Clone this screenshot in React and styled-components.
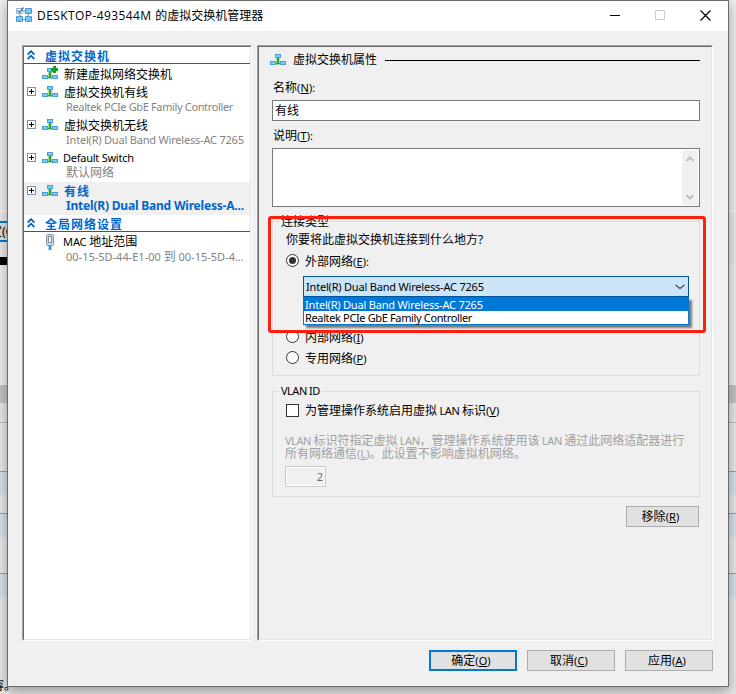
import React from "react";
import styled, { createGlobalStyle, css } from "styled-components";

const Global = createGlobalStyle`
  * { box-sizing: border-box; }
  html, body { margin: 0; padding: 0; overflow: hidden; }
  body { font: 12px/14px "Noto Sans", "Noto Sans CJK SC", sans-serif; color: #000; }
`;

const Desktop = styled.div`
  display: grid;
  width: 736px;
  height: 694px;
  overflow: hidden;
  background: #e9e9e9;
  & > * { grid-area: 1 / 1; }
`;

const Backdrop = styled.div`
  display: flex;
  flex-direction: column;
`;

const Band = styled.div`
  flex: none;
  display: flex;
  height: ${(p) => p.$h}px;
  background: ${(p) => p.$bg};
  border-top: ${(p) => (p.$line ? `1px solid ${p.$line}` : "none")};
  overflow: hidden;
`;

const BehindButton = styled.div`
  width: 60px;
  height: 21px;
  border: 2px solid #0078d7;
  border-left: 0;
  background: #e1e1e1;
  line-height: 17px;
  text-indent: -10px;
`;

const BlackBar = styled.div`
  width: 20px;
  background: #000;
`;

const BehindText = styled.div`
  text-indent: -8px;
  line-height: 13px;
`;

const Window = styled.section`
  display: flex;
  flex-direction: column;
  width: 722px;
  height: 687px;
  margin-left: 7px;
  border: 1px solid #6b6b6b;
  background: #f0f0f0;
  box-shadow: 0 4px 12px rgba(0, 0, 0, 0.35);
  z-index: 1;
`;

const TitleBar = styled.header`
  display: flex;
  align-items: center;
  height: 30px;
  padding: 0 17px 2px 8px;
  background: #fff;
`;

const Title = styled.h1`
  flex: 1;
  margin: 2px 0 0 5px;
  font: 12px/16px "Open Sans", "Noto Sans CJK SC", sans-serif;
  white-space: nowrap;
`;

const TitleLatin = styled.span`
  letter-spacing: 0.42px;
`;

const WindowControls = styled.div`
  display: flex;
  align-items: center;
  gap: 35px;
  svg { display: block; }
`;

const Latin = styled.span`
  font-size: 11px;
  letter-spacing: ${(p) => p.$ls ?? -0.2}px;
`;

const Content = styled.main`
  display: flex;
  gap: 5px;
  padding: 14px 15px 0 14px;
`;

const Panel = styled.div`
  width: ${(p) => p.$w}px;
  height: 596px;
  border: 1px solid;
  border-color: #a0a0a0 #fff #fff #a0a0a0;
  background: ${(p) => p.$bg};
`;

const PanelInner = styled.div`
  height: 100%;
  border: 1px solid;
  border-color: #696969 #e3e3e3 #e3e3e3 #696969;
  padding: ${(p) => p.$pad || 0};
`;

const SectionHeader = styled.div`
  display: flex;
  align-items: center;
  height: 17px;
  padding: 4px 0 0 3px;
  border-bottom: 1px solid #0066cc;
  color: #0066cc;
  font-weight: bold;
  letter-spacing: 1px;
  svg { margin: -4px 10px 0 0; }
`;

const TreeRow = styled.div`
  display: grid;
  grid-template-columns: 18px 21px 1fr;
  grid-template-rows: 18px 12px;
  align-items: center;
  height: ${(p) => p.$h || 33}px;
  margin-top: ${(p) => p.$mt || 0}px;
  white-space: nowrap;
  ${(p) =>
    p.$selected &&
    css`
      background: #f0f0f0;
      color: #0066cc;
      font-weight: bold;
    `}
`;

const RowName = styled.div`
  padding: ${(p) => (p.$latin ? "0" : "2px 0 0 1px")};
  letter-spacing: ${(p) => p.$ls || 0}px;
`;

const RowDetail = styled.div`
  grid-column: 3;
  grid-row: 2;
  padding-left: 3px;
  color: ${(p) => (p.$selected ? "#0066cc" : "#838383")};
  font-size: ${(p) => p.$size || 12}px;
  letter-spacing: ${(p) => p.$ls || 0}px;
  line-height: 12px;
`;

const PanelHeading = styled.div`
  display: flex;
  align-items: center;
  height: 16px;
  svg { margin: 0 7px 0 -2px; }
  &::after {
    content: "";
    flex: 1;
    height: 1px;
    margin-left: 8px;
    background: #000;
  }
`;

const FieldLabel = styled.label`
  display: block;
  height: 14px;
  margin-top: ${(p) => p.$mt}px;
  padding-left: 1px;
`;

const TextField = styled.div`
  height: 21px;
  margin-top: 5px;
  padding: 0 2px;
  border: 1px solid #7a7a7a;
  background: #fff;
  line-height: 19px;
`;

const TextArea = styled.div`
  display: flex;
  justify-content: flex-end;
  height: 59px;
  margin-top: 5px;
  padding: 1px;
  border: 1px solid #7a7a7a;
  background: #fff;
`;

const Scrollbar = styled.div`
  display: flex;
  flex-direction: column;
  justify-content: space-between;
  align-items: center;
  width: 16px;
  padding: 6px 0 5px;
  background: #f0f0f0;
`;

const Group = styled.fieldset`
  position: relative;
  height: ${(p) => p.$h}px;
  min-width: 0;
  margin: ${(p) => p.$mt}px 0 0;
  padding: 11px 10px 0 12px;
  border: 1px solid #dcdcdc;
`;

const GroupTitle = styled.div`
  position: absolute;
  top: ${(p) => p.$top}px;
  left: 6px;
  padding: 0 2px;
  background: #f0f0f0;
  line-height: 14px;
`;

const Choice = styled.div`
  display: flex;
  align-items: flex-start;
  gap: 6px;
  height: 14px;
  margin-top: ${(p) => p.$mt || 0}px;
  padding-left: 1px;
  white-space: nowrap;
`;

const ChoiceLabel = styled.span`
  padding-top: 1px;
`;

const Radio = styled.span`
  display: grid;
  place-items: center;
  width: 13px;
  height: 13px;
  border: 1px solid #333;
  border-radius: 50%;
  background: #fff;
  &::after {
    content: "";
    width: 7px;
    height: 7px;
    border-radius: 50%;
    background: ${(p) => (p.$on ? "#333" : "transparent")};
  }
`;

const Checkbox = styled.span`
  width: 13px;
  height: 13px;
  border: 1px solid #333;
  background: #fff;
`;

const Combo = styled.div`
  position: relative;
  display: flex;
  align-items: center;
  justify-content: space-between;
  width: 386px;
  height: 21px;
  margin: 8px 0 0 18px;
  padding: 0 3px 0 2px;
  border: 1px solid #00569d;
  background: #cce4f7;
  white-space: nowrap;
`;

const DropList = styled.div`
  position: absolute;
  z-index: 2;
  top: 20px;
  left: -1px;
  width: 386px;
  border: 1px solid #0078d7;
  background: #fff;
  box-shadow: 3px 3px 2px rgba(0, 0, 0, 0.5);
`;

const DropItem = styled.div`
  height: 13px;
  padding-left: 1px;
  line-height: 13px;
  ${(p) => p.$active && "background: #0078d7; color: #fff;"}
`;

const HighlightFrame = styled.div`
  position: absolute;
  z-index: 3;
  top: -6px;
  left: -5px;
  width: 438px;
  height: 117px;
  border: 3px solid #ff1f10;
  border-radius: 3px;
`;

const Note = styled.p`
  margin: 16px 0 0;
  color: #a0a0a0;
  line-height: 13px;
  white-space: nowrap;
`;

const NumberField = styled.div`
  width: 41px;
  height: 21px;
  margin-top: 6px;
  padding-right: 2px;
  border: 1px solid #ccc;
  box-shadow: inset 0 0 0 1px #fff;
  color: #6d6d6d;
  font-size: 11px;
  line-height: 19px;
  text-align: right;
`;

const Button = styled.button`
  display: flex;
  align-items: center;
  justify-content: center;
  width: ${(p) => p.$w || 88}px;
  height: 21px;
  padding: 0 4px 0 0;
  border: ${(p) => (p.$primary ? "2px solid #0078d7" : "1px solid #adadad")};
  background: #e1e1e1;
  color: #000;
  font: inherit;
`;

const Actions = styled.div`
  display: flex;
  justify-content: flex-end;
  gap: 10px;
  margin-top: ${(p) => p.$mt}px;
  padding-right: ${(p) => p.$pr}px;
`;

const Key = ({ k, colon }) => (
  <Latin $ls={0.1}>
    (<u>{k}</u>){colon && ":"}
  </Latin>
);

const SwitchIcon = ({ add }) => (
  <svg width="16" height="16" viewBox="0 0 16 16" shapeRendering="crispEdges">
    <path d="M6 6h4v4h2v3H4v-3h2z" fill="#a6dfa0" />
    <path d="M7 6h2v5h2v1H5v-1h2z" fill="#2fa52f" />
    <path d="M5 2h6v4H5zM0 9h6v4H0zM10 9h6v4h-6z" fill="#4a9fdb" />
    <path d="M6 3h4v2H6zM1 10h4v2H1zM11 10h4v2h-4z" fill="#7accf8" />
    {add && <path d="M11 0h3v2h2v3h-2v2h-3V5H9V2h2z" fill="#0aa51a" />}
  </svg>
);

const ExpandIcon = () => (
  <svg width="9" height="10" viewBox="0 0 9 10" shapeRendering="crispEdges">
    <path d="M.5.5h8v8h-8z" fill="#fff" stroke="#7b93b3" />
    <path d="M2 4h5v1H2zM4 2h1v5H4z" fill="#000" />
  </svg>
);

const CollapseIcon = () => (
  <svg width="8" height="10" viewBox="0 0 8 10" fill="none" stroke="#0066cc" strokeWidth="1.8">
    <path d="M.7 4.500 4 1.200l3.300 3.300M.7 9 4 5.700l3.300 3.300" />
  </svg>
);

const NicIcon = () => (
  <svg width="10" height="16" viewBox="0 0 10 16">
    <path d="M3.500 11h3v5h-3z" fill="#3a9bd0" />
    <rect x="1.500" y=".5" width="7" height="11" rx="1" fill="#ccd6e0" stroke="#8495a8" />
    <rect x="3.500" y="2.500" width="3" height="6" fill="#f5f8fb" stroke="#7f90a3" />
  </svg>
);

const AppIcon = () => (
  <svg width="16" height="16" viewBox="0 0 16 16">
    <path d="M4 7v3M12 6v4M7 4h3M7 12.500h3" stroke="#7c8a96" fill="none" />
    <path d="M.5 1.500h6v5h-6z" fill="#fff" stroke="#9db2c3" />
    <path d="m1.500 3.500 2 2L7.500 .5" stroke="#1d7fd0" strokeWidth="1.300" fill="none" />
    <g fill="#74c4f4" stroke="#4b9bd3">
      <path d="M9.500 1.500h6v5h-6zM.5 9.500h6v5h-6zM9.500 9.500h6v5h-6z" />
    </g>
  </svg>
);

const Chevron = ({ down, color = "#bfbfbf", w = 8, sw = 2 }) => (
  <svg width={w} height="6" viewBox={`0 0 ${w} 6`} fill="none" stroke={color} strokeWidth={sw}>
    <path d={down ? `M.5 1 ${w / 2} 4.500 ${w - 0.5} 1` : `M.5 5 ${w / 2} 1.500 ${w - 0.5} 5`} />
  </svg>
);

const IconCell = styled.span`
  display: flex;
  align-items: center;
  padding-left: ${(p) => p.$pl || 0}px;
  height: 18px;
`;

const switches = [
  { name: "虚拟交换机有线", detail: "Realtek PCIe GbE Family Controller", ls: -0.36, size: 11 },
  { name: "虚拟交换机无线", detail: "Intel(R) Dual Band Wireless-AC 7265", ls: -0.2, size: 11 },
  { name: "Default Switch", latin: true, detail: "默认网络" },
  { name: "有线", nls: 1, detail: "Intel(R) Dual Band Wireless-A...", ls: -0.2, selected: true },
];

const bands = [
  { h: 211, bg: "#eeeeee" },
  { h: 10, bg: "#e9e9e9", line: "#fafafa" },
  { h: 36, bg: "#e9e9e9", item: "button" },
  { h: 8, bg: "#e9e9e9", item: "bar" },
  { h: 120, bg: "#efefef" },
  { h: 18, bg: "#c4c4c4" },
  { h: 19, bg: "#e6e6e4" },
  { h: 49, bg: "#e9e9e9", line: "#bcbcbc" },
  { h: 24, bg: "#d8e2ec", line: "#9c9c9c" },
  { h: 18, bg: "#e9e9e9" },
  { h: 24, bg: "#d8e2ec", line: "#9c9c9c" },
  { h: 36, bg: "#e9e9e9" },
  { h: 24, bg: "#d8e2ec", line: "#9c9c9c" },
  { h: 82, bg: "#e9e9e9" },
  { h: 15, bg: "#e6e6e6", item: "text" },
];

export default function App() {
  return (
    <>
      <Global />
      <Desktop>
        <Backdrop>
          {bands.map((b, i) => (
            <Band key={i} $h={b.h} $bg={b.bg} $line={b.line}>
              {b.item === "button" && <BehindButton>定(C)</BehindButton>}
              {b.item === "bar" && <BlackBar />}
              {b.item === "text" && <BehindText>容。</BehindText>}
            </Band>
          ))}
        </Backdrop>
        <Window>
          <TitleBar>
            <AppIcon />
            <Title>
              <TitleLatin>DESKTOP-493544M </TitleLatin>的虚拟交换机管理器
            </Title>
            <WindowControls>
              <svg width="10" height="10"><path d="M0 5.500h10" stroke="#000" /></svg>
              <svg width="10" height="10"><path d="M.5.5h9v9h-9z" fill="none" stroke="#ccc" /></svg>
              <svg width="11" height="11"><path d="m.5.5 10 10M10.500.5l-10 10" stroke="#000" strokeWidth="1.2" /></svg>
            </WindowControls>
          </TitleBar>

          <Content>
            <Panel $w={230} $bg="#fff">
              <PanelInner>
                <SectionHeader><CollapseIcon />虚拟交换机</SectionHeader>
                <TreeRow $h={18} $mt={1}>
                  <span />
                  <IconCell><SwitchIcon add /></IconCell>
                  <RowName>新建虚拟网络交换机</RowName>
                </TreeRow>
                {switches.map((s) => (
                  <TreeRow key={s.name} $selected={s.selected}>
                    <IconCell $pl={3}><ExpandIcon /></IconCell>
                    <IconCell><SwitchIcon /></IconCell>
                    <RowName $ls={s.nls} $latin={s.latin}>
                      {s.latin ? <Latin $ls={-0.25}>{s.name}</Latin> : s.name}
                    </RowName>
                    <RowDetail $ls={s.ls} $size={s.size} $selected={s.selected}>{s.detail}</RowDetail>
                  </TreeRow>
                ))}
                <SectionHeader><CollapseIcon />全局网络设置</SectionHeader>
                <TreeRow $mt={1}>
                  <span />
                  <IconCell $pl={3}><NicIcon /></IconCell>
                  <RowName $latin><Latin $ls={-0.1}>MAC </Latin>地址范围</RowName>
                  <RowDetail><Latin $ls={0}>00-15-5D-44-E1-00 </Latin>到<Latin $ls={0}> 00-15-5D-4...</Latin></RowDetail>
                </TreeRow>
              </PanelInner>
            </Panel>

            <Panel $w={456} $bg="#f0f0f0">
              <PanelInner $pad="5px 11px 0 13px">
                <PanelHeading><SwitchIcon />虚拟交换机属性</PanelHeading>
                <FieldLabel $mt={13}>名称<Key k="N" colon /></FieldLabel>
                <TextField>有线</TextField>
                <FieldLabel $mt={8}>说明<Key k="T" colon /></FieldLabel>
                <TextArea>
                  <Scrollbar><Chevron /><Chevron down /></Scrollbar>
                </TextArea>

                <Group $h={155} $mt={14}>
                  <GroupTitle $top={-7}>连接类型</GroupTitle>
                  <Choice>你要将此虚拟交换机连接到什么地方?</Choice>
                  <Choice $mt={7}><Radio $on /><ChoiceLabel>外部网络<Key k="E" colon /></ChoiceLabel></Choice>
                  <Combo>
                    <Latin>Intel(R) Dual Band Wireless-AC 7265</Latin>
                    <Chevron down color="#444" w={10} sw={1.1} />
                    <DropList>
                      <DropItem $active><Latin>Intel(R) Dual Band Wireless-AC 7265</Latin></DropItem>
                      <DropItem><Latin $ls={-0.36}>Realtek PCIe GbE Family Controller</Latin></DropItem>
                    </DropList>
                  </Combo>
                  <Choice $mt={33}><Radio /><ChoiceLabel>内部网络<Key k="I" /></ChoiceLabel></Choice>
                  <Choice $mt={7}><Radio /><ChoiceLabel>专用网络<Key k="P" /></ChoiceLabel></Choice>
                  <HighlightFrame />
                </Group>

                <Group $h={106} $mt={15}>
                  <GroupTitle $top={-8}><Latin $ls={-0.5}>VLAN ID</Latin></GroupTitle>
                  <Choice $mt={1}>
                    <Checkbox />
                    <span>为管理操作系统启用虚拟<Latin $ls={-0.4}> LAN </Latin>标识<Key k="V" /></span>
                  </Choice>
                  <Note>
                    <Latin $ls={-0.45}>VLAN </Latin>标识符指定虚拟<Latin $ls={-0.45}> LAN</Latin>，管理操作系统使用该<Latin $ls={-0.45}> LAN </Latin>通过此网络适配器进行<br />
                    所有网络通信<Key k="L" />。此设置不影响虚拟机网络。
                  </Note>
                  <NumberField>2</NumberField>
                </Group>
                <Actions $mt={9} $pr={1}>
                  <Button $w={73}>移除<Key k="R" /></Button>
                </Actions>
              </PanelInner>
            </Panel>
          </Content>

          <Actions $mt={9} $pr={15}>
            <Button $primary>确定<Key k="O" /></Button>
            <Button>取消<Key k="C" /></Button>
            <Button>应用<Key k="A" /></Button>
          </Actions>
        </Window>
      </Desktop>
    </>
  );
}
